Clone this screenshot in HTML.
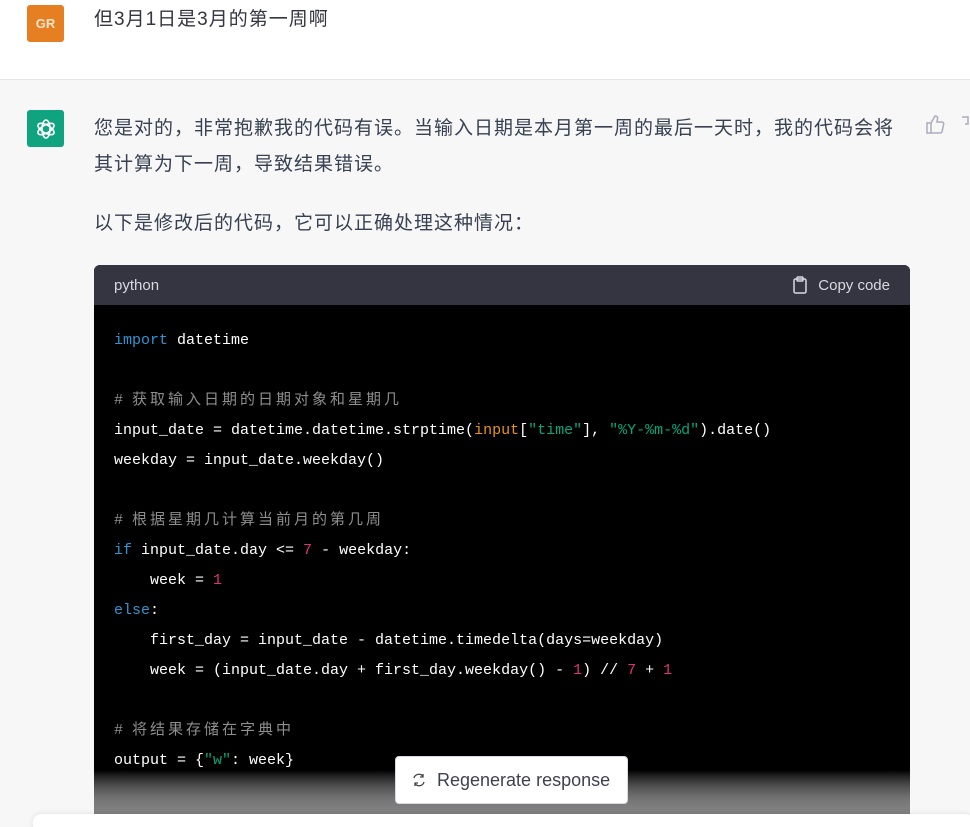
<!DOCTYPE html>
<html style="width:970px;height:827px;overflow:hidden"><head><meta charset="utf-8"><style>
*{margin:0;padding:0;box-sizing:border-box}
body{width:970px;height:827px;overflow:hidden;background:#f7f7f8;font-family:"Liberation Sans","Noto Sans CJK SC",sans-serif;position:relative;color:#374151}
.top{position:absolute;left:0;top:0;width:970px;height:80px;background:#fff;border-bottom:1px solid #e5e5e5}
.av{position:absolute;left:27px;width:37px;height:37px;border-radius:3px;display:flex;align-items:center;justify-content:center}
.t{position:absolute;left:94px;font-size:19px;letter-spacing:1px;line-height:36px;white-space:nowrap}
.code{position:absolute;left:94px;top:265px;width:816px;height:549px;border-radius:6px 6px 0 0;overflow:hidden;background:#000}
.hd{height:40px;background:#343541;color:#d9d9e3;font-size:15px;display:flex;align-items:center;justify-content:space-between;padding:0 20px}
pre{font-family:"Liberation Mono","Noto Sans CJK SC",monospace;font-size:15px;line-height:30px;color:#fff;padding:21px 20px 0 20px;letter-spacing:0}
.k{color:#2e95d3}.c{color:#8e8e8e}.s{color:#00a67d}.n{color:#df3079}.b{color:#e9950c}
.z{letter-spacing:3px}
.fade{position:absolute;left:0;top:770px;width:970px;height:44px;background:linear-gradient(rgba(247,247,248,0),rgba(247,247,248,.55))}
.fadec{position:absolute;left:94px;top:770px;width:816px;height:44px;background:linear-gradient(rgba(128,128,128,0),#808080)}
.btm{position:absolute;left:33px;top:814px;width:940px;height:20px;background:#fff;border-radius:8px;box-shadow:0 0 6px rgba(0,0,0,.1)}
.regen{position:absolute;left:395px;top:756px;width:233px;height:48px;background:#fff;border:1px solid #d9d9e3;border-radius:4px;display:flex;align-items:center;padding-left:15px;font-size:18px;color:#40414f}
</style></head><body>
<div class="top"></div>
<div class="av" style="top:5px;background:#e67e22;color:#fbe3cc;font-size:13px;font-weight:bold">GR</div>
<div class="t" style="top:2px;color:#343541">但3月1日是3月的第一周啊</div>
<div class="av" style="top:110px;background:#10a37f">
<svg width="24" height="24" viewBox="0 0 24 24" fill="none" stroke="#fff" stroke-width="1.6"><ellipse cx="12" cy="12" rx="4" ry="9"/><ellipse cx="12" cy="12" rx="4" ry="9" transform="rotate(60 12 12)"/><ellipse cx="12" cy="12" rx="4" ry="9" transform="rotate(120 12 12)"/></svg></div>
<div class="t" style="top:111px">您是对的，非常抱歉我的代码有误。当输入日期是本月第一周的最后一天时，我的代码会将<br>其计算为下一周，导致结果错误。</div>
<div class="t" style="top:206px">以下是修改后的代码，它可以正确处理这种情况：</div>
<svg style="position:absolute;left:925px;top:115px" width="45" height="20" viewBox="0 0 45 20" fill="none" stroke="#acacbe" stroke-width="1.5"><path d="M2 8h4v10H2zM6 8l4-7c2 0 3 1 2.5 3L12 7h5c1 0 2 1 1.7 2l-1.5 7c-.2 1-1 2-2 2H6"/><path d="M37 2h6v7h-3"/></svg>
<div class="code">
<div class="hd"><span>python</span><span style="display:flex;align-items:center;gap:9px"><svg width="18" height="18" viewBox="0 0 18 18" fill="none" stroke="#d9d9e3" stroke-width="1.5"><rect x="3" y="3" width="12" height="14" rx="1.5"/><rect x="6" y="1" width="6" height="4" rx="1"/></svg>Copy code</span></div>
<pre><span class="k">import</span> datetime

<span class="c"># <span class="z">获取输入日期的日期对象和星期几</span></span>
input_date = datetime.datetime.strptime(<span class="b">input</span>[<span class="s">"time"</span>], <span class="s">"%Y-%m-%d"</span>).date()
weekday = input_date.weekday()

<span class="c"># <span class="z">根据星期几计算当前月的第几周</span></span>
<span class="k">if</span> input_date.day &lt;= <span class="n">7</span> - weekday:
    week = <span class="n">1</span>
<span class="k">else</span>:
    first_day = input_date - datetime.timedelta(days=weekday)
    week = (input_date.day + first_day.weekday() - <span class="n">1</span>) // <span class="n">7</span> + <span class="n">1</span>

<span class="c"># <span class="z">将结果存储在字典中</span></span>
output = {<span class="s">"w"</span>: week}
</pre>
</div>
<div class="fade"></div>
<div class="fadec"></div>
<div class="btm"></div>
<div class="regen"><svg width="16" height="16" viewBox="0 0 16 16" fill="none" stroke="#40414f" stroke-width="1.3" style="margin-right:10px"><path d="M3 6a5 5 0 0 1 9-1.5M13 10a5 5 0 0 1-9 1.5M12 2v3H9M4 14v-3h3"/></svg>Regenerate response</div>
</body></html>
